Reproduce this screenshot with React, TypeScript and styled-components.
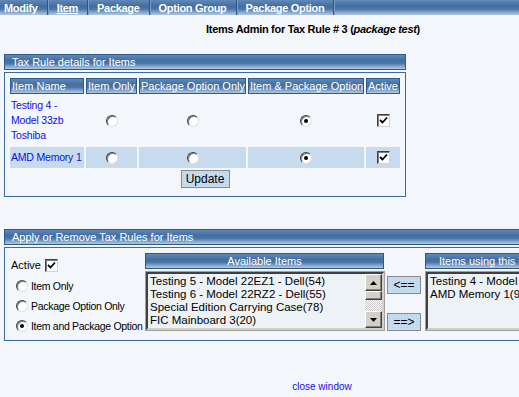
import React from 'react';
import styled, { createGlobalStyle, css } from 'styled-components';

const GlobalStyle = createGlobalStyle`
  html, body {
    margin: 0;
    padding: 0;
    background: #f3f7fb;
    overflow: hidden;
  }
  body {
    font-family: 'Liberation Sans', Arial, sans-serif;
    font-size: 11px;
    color: #000;
  }
`;

const barGradient = css`
  background: linear-gradient(
    to bottom,
    #6289b6 0%,
    #416da0 40%,
    #4a76a8 60%,
    #8eaccf 85%,
    #b3c8e0 100%
  );
`;

const Page = styled.div`
  width: 640px;
  padding-bottom: 20px;
`;

const NavBar = styled.div`
  display: flex;
  height: 15px;
  ${barGradient};
`;

const Tab = styled.a<{ $active?: boolean; $first?: boolean }>`
  display: flex;
  align-items: center;
  padding: 0 9px 0 ${(p) => (p.$first ? '4px' : '9px')};
  border-right: 1px solid #2b568a;
  box-shadow: 1px 0 0 #7c9dc4;
  color: #fff;
  font-weight: bold;
  font-size: 11px;
  letter-spacing: -0.3px;
  text-decoration: ${(p) => (p.$active ? 'underline' : 'none')};
  white-space: nowrap;
`;

const Title = styled.h1`
  margin: 7px 0 0;
  width: 626px;
  text-align: center;
  font-size: 11px;
  font-weight: bold;
  letter-spacing: -0.3px;
  line-height: 14px;
`;

const Section = styled.section<{ $width: number; $top: number }>`
  width: ${(p) => p.$width}px;
  margin: ${(p) => p.$top}px 0 0 4px;
`;

const SectionHeader = styled.div`
  height: 14px;
  line-height: 14px;
  padding-left: 7px;
  border: 1px solid #2c5a8c;
  ${barGradient};
  color: #fff;
  font-size: 11px;
`;

const SectionBody = styled.div`
  margin-top: 2px;
  border: 1px solid #3b6a9c;
  padding: 3px;
`;

const Table = styled.table`
  border-collapse: separate;
  border-spacing: 2px;
  table-layout: fixed;
  width: 100%;
`;

const HeadCell = styled.th`
  height: 14px;
  padding: 0 1px;
  border: 1px solid #2c5a8c;
  ${barGradient};
  color: #fff;
  font-weight: normal;
  font-size: 11px;
  text-align: left;
  white-space: nowrap;
  overflow: hidden;
`;

const Row = styled.tr<{ $shaded?: boolean }>`
  background: ${(p) => (p.$shaded ? '#c6dcee' : 'transparent')};
  height: ${(p) => (p.$shaded ? '21px' : 'auto')};
`;

const Cell = styled.td<{ $center?: boolean }>`
  padding: 2px 1px;
  text-align: ${(p) => (p.$center ? 'center' : 'left')};
  vertical-align: middle;
`;

const ItemLink = styled.a`
  display: block;
  color: #1010e8;
  text-decoration: none;
  font-size: 10.5px;
  line-height: 15px;
  letter-spacing: -0.2px;
`;

const Radio = styled.span<{ $checked?: boolean }>`
  display: inline-block;
  flex-shrink: 0;
  position: relative;
  width: 10px;
  height: 10px;
  border-radius: 50%;
  background: #fff;
  border: 1px solid;
  border-color: #404040 #e0e0e0 #e0e0e0 #404040;
  box-shadow: inset 1px 1px 0 #808080;
  vertical-align: middle;
  &::after {
    content: '';
    display: ${(p) => (p.$checked ? 'block' : 'none')};
    position: absolute;
    left: 3px;
    top: 3px;
    width: 4px;
    height: 4px;
    border-radius: 50%;
    background: #000;
  }
`;

const CheckBox = styled.span`
  display: inline-flex;
  align-items: center;
  justify-content: center;
  width: 11px;
  height: 11px;
  background: #fff;
  border: 1px solid;
  border-color: #404040 #d4d0c8 #d4d0c8 #404040;
  box-shadow: inset 1px 1px 0 #808080;
  vertical-align: middle;
`;

const Check = () => (
  <CheckBox>
    <svg width="9" height="9" viewBox="0 0 9 9">
      <path d="M1 4 L3.5 6.5 L8 1.5" fill="none" stroke="#000" strokeWidth="1.8" />
    </svg>
  </CheckBox>
);

const ButtonRow = styled.div`
  display: flex;
  justify-content: center;
  padding: 0 0 5px;
`;

const PlainButton = styled.button<{ $w: number }>`
  width: ${(p) => p.$w}px;
  height: 18px;
  padding: 0;
  border: 1px solid #8a8a8a;
  background-color: #c6dcef;
  background-image: radial-gradient(#b3cbe2 0.6px, transparent 0.8px);
  background-size: 3px 3px;
  font-family: 'Liberation Sans', Arial, sans-serif;
  font-size: 12px;
  color: #000;
`;

const ApplyBody = styled.div`
  display: flex;
  align-items: flex-start;
  margin-top: 2px;
  border: 1px solid #3b6a9c;
  border-right: none;
  padding: 5px 0 9px;
  height: 78px;
`;

const Options = styled.div`
  box-sizing: border-box;
  width: 140px;
  flex-shrink: 0;
  padding: 5px 0 0 6px;
  display: flex;
  flex-direction: column;
`;

const ActiveLine = styled.label`
  display: flex;
  align-items: center;
  gap: 4px;
  height: 14px;
  margin-bottom: 4px;
`;

const OptionLine = styled.label`
  display: flex;
  align-items: center;
  gap: 3px;
  height: 20px;
  padding-left: 5px;
  font-size: 10.5px;
  letter-spacing: -0.3px;
  white-space: nowrap;
`;

const ListColumn = styled.div<{ $w: number }>`
  width: ${(p) => p.$w}px;
  flex-shrink: 0;
  display: flex;
  flex-direction: column;
  gap: 3px;
`;

const ListHeader = styled.div`
  height: 14px;
  line-height: 14px;
  border: 1px solid #2c5a8c;
  ${barGradient};
  color: #fff;
  text-align: center;
  font-size: 11px;
  white-space: nowrap;
  overflow: hidden;
`;

const ListBox = styled.div`
  display: flex;
  height: 54px;
  margin-left: 1px;
  border: 2px solid;
  border-color: #404040 #d4d0c8 #d4d0c8 #404040;
  outline: 1px solid #a0a0a0;
  background: #edf2f6;
`;

const ListItems = styled.div`
  flex: 1;
  padding: 1px 2px;
  overflow: hidden;
  font-size: 11.5px;
  line-height: 13px;
  white-space: nowrap;
`;

const ScrollBar = styled.div`
  width: 17px;
  display: flex;
  flex-direction: column;
  background-color: #f0f0f0;
  background-image: repeating-conic-gradient(#c8c8c8 0 25%, #fff 0 50%);
  background-size: 2px 2px;
`;

const ScrollButton = styled.div<{ $h: number }>`
  height: ${(p) => p.$h}px;
  display: flex;
  align-items: center;
  justify-content: center;
  background: #d4d0c8;
  border: 1px solid;
  border-color: #fff #404040 #404040 #fff;
  box-shadow: inset -1px -1px 0 #808080;
  box-sizing: border-box;
`;

const Spacer = styled.div`
  flex: 1;
`;

const Arrow = ({ up }: { up?: boolean }) => (
  <svg width="7" height="4" viewBox="0 0 7 4">
    <path d={up ? 'M0 4 L3.5 0 L7 4 Z' : 'M0 0 L7 0 L3.5 4 Z'} fill="#000" />
  </svg>
);

const MoveButtons = styled.div`
  box-sizing: border-box;
  width: 41px;
  flex-shrink: 0;
  padding: 23px 0 0 3px;
  display: flex;
  flex-direction: column;
  gap: 19px;
`;

const Footer = styled.div`
  width: 644px;
  margin-top: 39px;
  text-align: center;
`;

const CloseLink = styled.a`
  color: #1010e8;
  font-size: 10px;
  text-decoration: none;
`;

const available = [
  'Testing 5 - Model 22EZ1 - Dell(54)',
  'Testing 6 - Model 22RZ2 - Dell(55)',
  'Special Edition Carrying Case(78)',
  'FIC Mainboard 3(20)',
];

const using = ['Testing 4 - Model 33zb Toshiba(8)', 'AMD Memory 1(9)'];

export default function App() {
  return (
    <Page>
      <GlobalStyle />
      <NavBar>
        <Tab $first>Modify</Tab>
        <Tab $active>Item</Tab>
        <Tab>Package</Tab>
        <Tab>Option Group</Tab>
        <Tab>Package Option</Tab>
      </NavBar>

      <Title>
        Items Admin for Tax Rule # 3 (<i>package test</i>)
      </Title>

      <Section $width={402} $top={18}>
        <SectionHeader>Tax Rule details for Items</SectionHeader>
        <SectionBody>
          <Table>
            <colgroup>
              <col style={{ width: 74 }} />
              <col style={{ width: 51 }} />
              <col style={{ width: 107 }} />
              <col style={{ width: 116 }} />
              <col />
            </colgroup>
            <thead>
              <tr>
                <HeadCell>Item Name</HeadCell>
                <HeadCell>Item Only</HeadCell>
                <HeadCell>Package Option Only</HeadCell>
                <HeadCell>Item &amp; Package Option</HeadCell>
                <HeadCell>Active</HeadCell>
              </tr>
            </thead>
            <tbody>
              <Row>
                <Cell>
                  <ItemLink>Testing 4 - Model 33zb Toshiba</ItemLink>
                </Cell>
                <Cell $center><Radio /></Cell>
                <Cell $center><Radio /></Cell>
                <Cell $center><Radio $checked /></Cell>
                <Cell $center><Check /></Cell>
              </Row>
              <Row $shaded>
                <Cell>
                  <ItemLink>AMD Memory 1</ItemLink>
                </Cell>
                <Cell $center><Radio /></Cell>
                <Cell $center><Radio /></Cell>
                <Cell $center><Radio $checked /></Cell>
                <Cell $center><Check /></Cell>
              </Row>
            </tbody>
          </Table>
          <ButtonRow>
            <PlainButton $w={49}>Update</PlainButton>
          </ButtonRow>
        </SectionBody>
      </Section>

      <Section $width={680} $top={32}>
        <SectionHeader>Apply or Remove Tax Rules for Items</SectionHeader>
        <ApplyBody>
          <Options>
            <ActiveLine>
              Active <Check />
            </ActiveLine>
            <OptionLine><Radio /> Item Only</OptionLine>
            <OptionLine><Radio /> Package Option Only</OptionLine>
            <OptionLine><Radio $checked /> Item and Package Option</OptionLine>
          </Options>

          <ListColumn $w={239}>
            <ListHeader>Available Items</ListHeader>
            <ListBox>
              <ListItems>
                {available.map((a) => (
                  <div key={a}>{a}</div>
                ))}
              </ListItems>
              <ScrollBar>
                <ScrollButton $h={17}><Arrow up /></ScrollButton>
                <ScrollButton $h={9} />
                <Spacer />
                <ScrollButton $h={17}><Arrow /></ScrollButton>
              </ScrollBar>
            </ListBox>
          </ListColumn>

          <MoveButtons>
            <PlainButton $w={34}>&lt;==</PlainButton>
            <PlainButton $w={34}>==&gt;</PlainButton>
          </MoveButtons>

          <ListColumn $w={150}>
            <ListHeader>Items using this Tax Rule</ListHeader>
            <ListBox>
              <ListItems>
                {using.map((u) => (
                  <div key={u}>{u}</div>
                ))}
              </ListItems>
            </ListBox>
          </ListColumn>
        </ApplyBody>
      </Section>

      <Footer>
        <CloseLink>close window</CloseLink>
      </Footer>
    </Page>
  );
}
